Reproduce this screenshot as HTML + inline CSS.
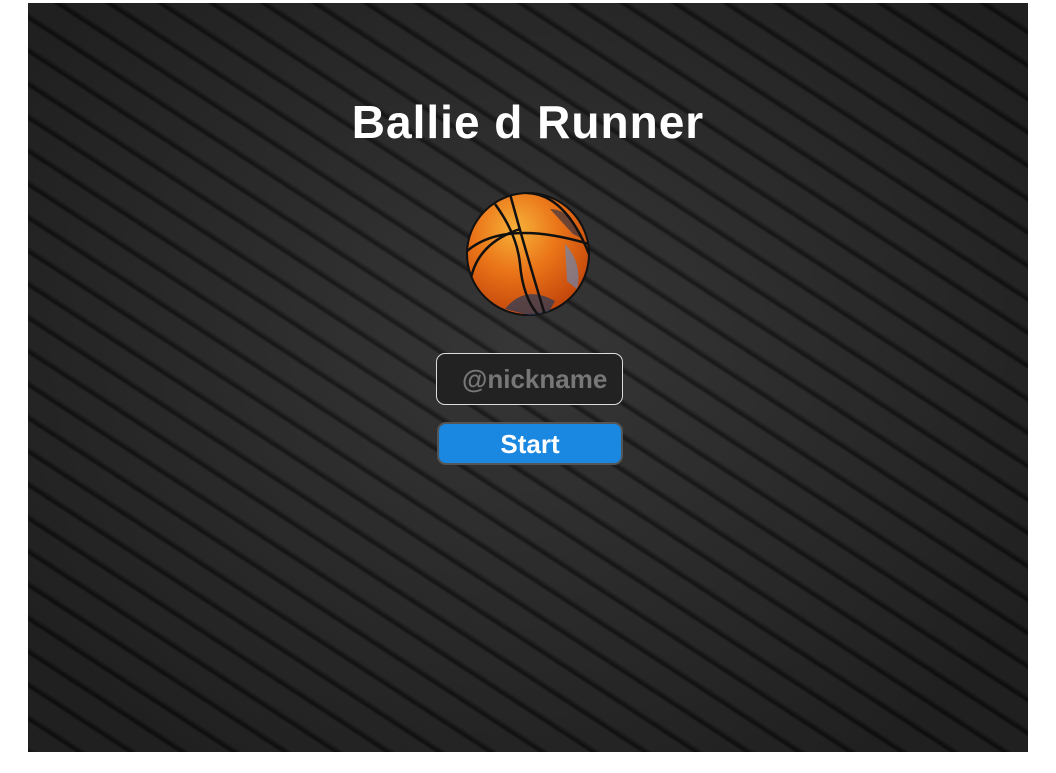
<!DOCTYPE html>
<html><head><style>
html,body{margin:0;padding:0;background:#fff;width:1056px;height:773px;overflow:hidden}
#bg{position:absolute;left:28px;top:3px;width:1000px;height:749px;overflow:hidden;
background:
radial-gradient(ellipse at 50% 45%,rgba(255,255,255,0.04),rgba(0,0,0,0.3) 85%),
repeating-linear-gradient(213deg,#2e2e2e 0px,#2e2e2e 20px,#1c1c1c 23px,#121212 25px,#2e2e2e 28px);}
h1{position:absolute;left:0;width:1000px;top:92px;margin:0;text-align:center;color:#fff;font:bold 46px "Comic Sans MS","Liberation Sans",sans-serif;letter-spacing:1px}
.in{position:absolute;left:408px;top:350px;width:187px;height:52px;border:1px solid #ddd;border-radius:9px;background:#222;box-sizing:border-box;color:#777;font:bold 26px "Liberation Sans",sans-serif;line-height:50px;padding-left:25px;overflow:hidden;white-space:nowrap}
.btn{position:absolute;left:409px;top:419px;width:186px;height:43px;border-radius:9px;background:#1a87e0;border:2px solid #555;box-sizing:border-box;color:#fff;font:bold 26px "Comic Sans MS","Liberation Sans",sans-serif;text-align:center;line-height:40px}
</style></head><body>
<div id="bg">
<h1>Ballie d Runner</h1>
<svg style="position:absolute;left:437px;top:186px" width="126" height="130" viewBox="0 0 126 130">
<defs><radialGradient id="g" cx="40%" cy="30%" r="70%"><stop offset="0" stop-color="#f7b23a"/><stop offset="0.5" stop-color="#ea7418"/><stop offset="1" stop-color="#c4480c"/></radialGradient><clipPath id="c"><circle cx="63" cy="65" r="61"/></clipPath></defs>
<circle cx="63" cy="65" r="61" fill="url(#g)" stroke="#111" stroke-width="2"/>
<g clip-path="url(#c)">
<path d="M40 120 Q60 95 90 112 L80 130 Z" fill="#233a5c" opacity=".7"/>
<path d="M100 55 Q118 75 112 100 L102 92 Z" fill="#5c8ec8" opacity=".6"/>
<path d="M85 20 Q105 20 118 50 L108 45 Z" fill="#1f2a48" opacity=".6"/>
</g>
<g fill="none" stroke="#111" stroke-width="2.5" clip-path="url(#c)">
<path d="M45 5 Q60 60 80 126"/>
<path d="M2 62 Q40 30 124 55"/>
<path d="M30 15 Q52 45 55 75 Q58 110 75 128"/>
<path d="M5 95 Q10 55 55 40"/>
<path d="M62 4 Q100 5 124 65"/>
</g>
</svg>
<div class="in">@nickname</div>
<div class="btn">Start</div>
</div>
</body></html>
